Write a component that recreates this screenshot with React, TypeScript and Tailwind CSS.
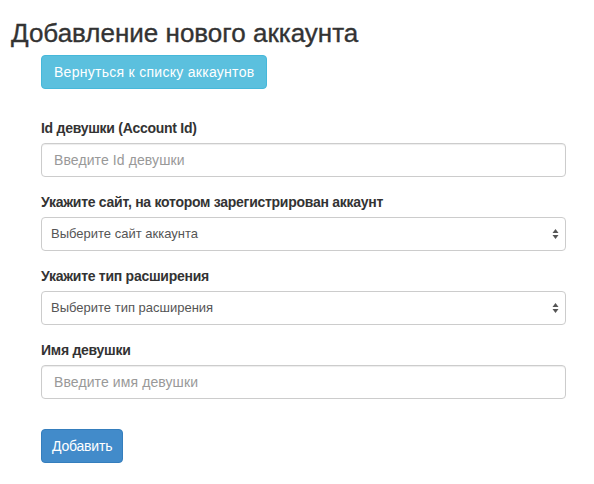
import React from "react";

const font = { fontFamily: '"Liberation Sans", Arial, sans-serif' };

function Arrows() {
  return (
    <svg width="7" height="11" viewBox="0 0 7 11" className="absolute right-[6px] top-1/2 -translate-y-1/2">
      <path d="M3.5 0.5 L6.5 4.5 L0.5 4.5 Z" fill="#555" />
      <path d="M0.5 6.5 L6.5 6.5 L3.5 10.5 Z" fill="#555" />
    </svg>
  );
}

function Label({ children }: { children: React.ReactNode }) {
  return <div className="text-[14px] leading-[20px] font-bold tracking-[-0.27px] text-[#333] mb-[5px]">{children}</div>;
}

function Input({ placeholder }: { placeholder: string }) {
  return (
    <div className="h-[34px] border border-[#ccc] rounded-[4px] bg-white px-[12px] flex items-center text-[14px] tracking-[0.1px] text-[#999] shadow-[inset_0_1px_1px_rgba(0,0,0,0.075)]">
      {placeholder}
    </div>
  );
}

function Select({ value }: { value: string }) {
  return (
    <div className="relative h-[34px] border border-[#ccc] rounded-[4px] bg-white pl-[9px] flex items-center text-[13px] text-[#555]">
      {value}
      <Arrows />
    </div>
  );
}

export default function App() {
  return (
    <div className="w-[594px] h-[484px] bg-white" style={font}>
      <h3 className="pl-[11px] pt-[19px] text-[26px] leading-[28px] text-[#333] [-webkit-text-stroke:0.35px_#333]">Добавление нового аккаунта</h3>
      <div className="ml-[41px] w-[525px]">
        <button className="mt-[8px] h-[34px] px-[12px] rounded-[4px] bg-[#5bc0de] border border-[#46b8da] text-white text-[14px] tracking-[0.28px]">
          Вернуться к списку аккаунтов
        </button>
        <div className="mt-[29px]">
          <Label>Id девушки (Account Id)</Label>
          <Input placeholder="Введите Id девушки" />
        </div>
        <div className="mt-[15px]">
          <Label>Укажите сайт, на котором зарегистрирован аккаунт</Label>
          <Select value="Выберите сайт аккаунта" />
        </div>
        <div className="mt-[15px]">
          <Label>Укажите тип расширения</Label>
          <Select value="Выберите тип расширения" />
        </div>
        <div className="mt-[15px]">
          <Label>Имя девушки</Label>
          <Input placeholder="Введите имя девушки" />
        </div>
        <button className="mt-[30px] h-[34px] px-[10px] rounded-[4px] bg-[#428bca] border border-[#357ebd] text-white text-[14px] tracking-[-0.2px]">
          Добавить
        </button>
      </div>
    </div>
  );
}
